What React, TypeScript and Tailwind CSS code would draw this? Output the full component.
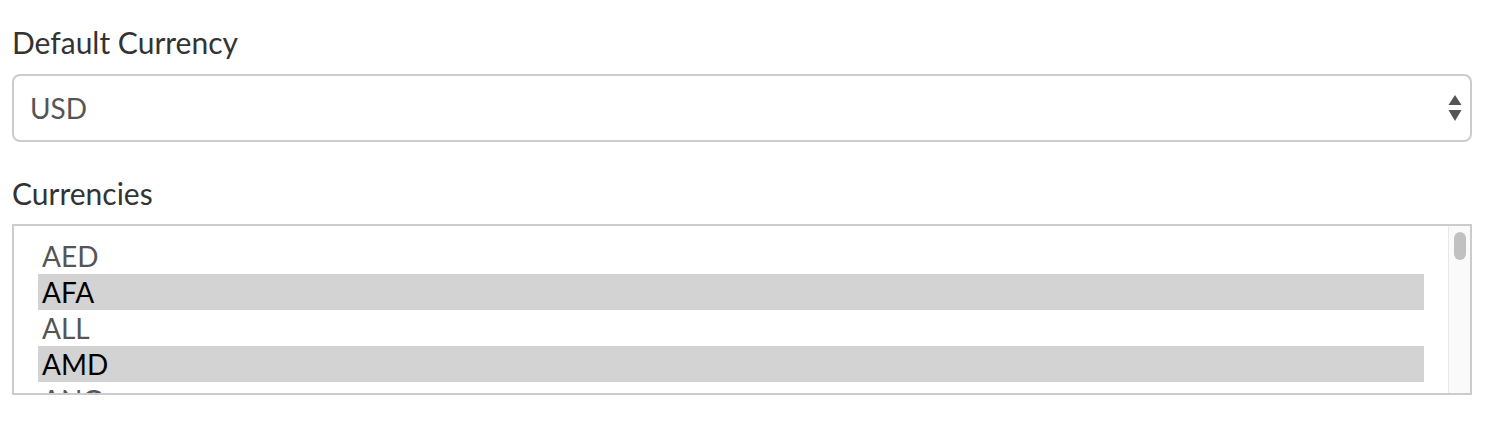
const currencies = [
  { code: "AED", selected: false },
  { code: "AFA", selected: true },
  { code: "ALL", selected: false },
  { code: "AMD", selected: true },
  { code: "ANG", selected: false },
]

function SelectArrows() {
  return (
    <svg width="14" height="27" viewBox="0 0 14 27" className="shrink-0">
      <polygon points="7,0 13.5,10 0.5,10" fill="#555" />
      <polygon points="0.5,15 13.5,15 7,26" fill="#555" />
    </svg>
  )
}

export default function App() {
  return (
    <div className="min-h-[428px] bg-white pt-[22px] pl-[12px]" style={{ fontFamily: "Lato, 'Open Sans', sans-serif" }}>
      <div className="w-[1460px]">
        <label className="block text-[30px] leading-[40px] text-[#333] mb-[12px]">Default Currency</label>
        <div className="flex h-[68px] items-center justify-between rounded-[8px] border-2 border-[#ccc] bg-white pl-[16px] pr-[8px]">
          <span className="text-[28px] text-[#555]">USD</span>
          <SelectArrows />
        </div>

        <label className="mt-[31px] mb-[11px] block text-[30px] leading-[40px] text-[#333]">Currencies</label>
        <div className="flex h-[171px] overflow-hidden border-2 border-[#ccc] bg-white">
          <div className="flex-1 px-[24px] pt-[12px]">
            {currencies.map((c) => (
              <div
                key={c.code}
                className={
                  c.selected
                    ? "h-[36px] pl-[4px] text-[28px] leading-[36px] bg-[#d3d3d3] text-black"
                    : "h-[36px] pl-[4px] text-[28px] leading-[36px] text-[#555]"
                }
              >
                {c.code}
              </div>
            ))}
          </div>
          <div className="w-[22px] shrink-0 border-l border-[#e8e8e8] bg-[#fafafa] pt-[6px] pl-[5px]">
            <div className="h-[28px] w-[12px] rounded-full bg-[#c1c1c1]" />
          </div>
        </div>
      </div>
    </div>
  )
}
